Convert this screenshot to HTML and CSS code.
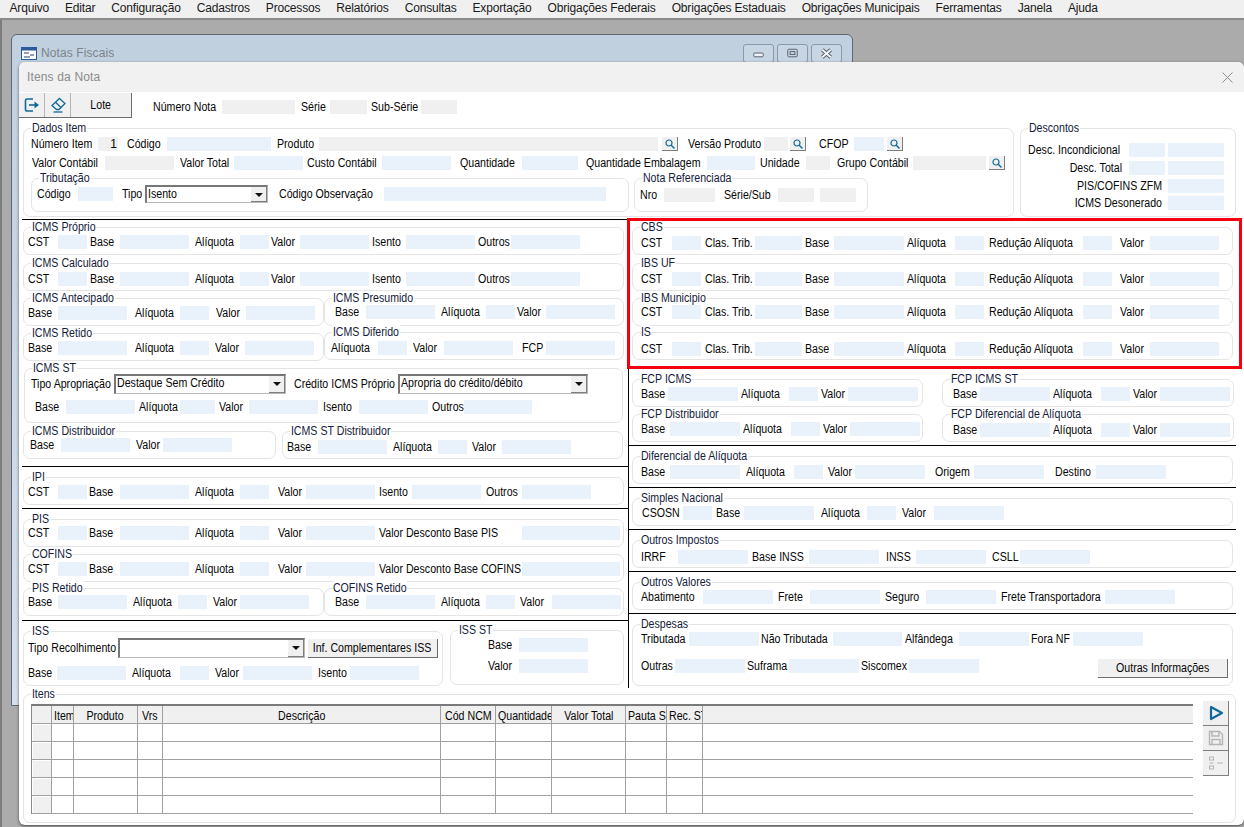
FILE: index.html
```html
<!DOCTYPE html>
<html lang="pt-BR">
<head>
<meta charset="utf-8">
<title>Itens da Nota</title>
<link rel="stylesheet" href="styles.css">
</head>
<body>
<nav class="menu">
  <a>Arquivo</a><a>Editar</a><a>Configuração</a><a>Cadastros</a><a>Processos</a><a>Relatórios</a><a>Consultas</a><a>Exportação</a><a>Obrigações Federais</a><a>Obrigações Estaduais</a><a>Obrigações Municipais</a><a>Ferramentas</a><a>Janela</a><a>Ajuda</a>
</nav>
<main class="desktop">
  <section class="win-outer">
    <header class="outer-title">
      <svg class="app-ico" viewBox="0 0 16 13"><rect x=".5" y=".5" width="15" height="12" fill="#fff" stroke="#2b5a9a"/><rect x="1" y="1" width="14" height="2.5" fill="#2b5a9a"/><path d="M3 6h5M9 8h4M3 10h6" stroke="#1f3f70" fill="none"/></svg>
      <span class="outer-name">Notas Fiscais</span>
      <div class="caption-btns">
        <span class="cap"><svg viewBox="0 0 30 18"><rect x="10" y="8.5" width="10" height="4" rx="1" fill="#eef1f5" stroke="#555e6c"/></svg></span>
        <span class="cap"><svg viewBox="0 0 30 18"><rect x="10" y="4.5" width="10" height="8" rx="1" fill="none" stroke="#555e6c"/><rect x="12.5" y="7" width="5" height="3" fill="none" stroke="#555e6c"/></svg></span>
        <span class="cap"><svg viewBox="0 0 31 18"><path d="M11 5l9 8M20 5l-9 8" stroke="#555e6c" stroke-width="4" fill="none"/><path d="M11 5l9 8M20 5l-9 8" stroke="#f2f4f7" stroke-width="2" fill="none"/></svg></span>
      </div>
    </header>
  </section>

  <section class="win-inner">
    <header class="inner-title">
      <span>Itens da Nota</span>
      <svg class="inner-x" viewBox="0 0 11 11"><path d="M.5.5l10 10M10.5.5l-10 10" stroke="#8d8d8d" fill="none"/></svg>
    </header>

    <div class="head-row">
      <div class="tbar">
        <button class="tb w25"><svg viewBox="0 0 16 16"><path d="M9 2H3a1.5 1.5 0 0 0-1.5 1.5v9A1.5 1.5 0 0 0 3 14h6" fill="none" stroke="#10699a" stroke-width="1.6"/><path d="M5 8h8" stroke="#10699a" stroke-width="1.6"/><path d="M10.5 4.5 15 8l-4.500 3.500z" fill="#10699a"/></svg></button>
        <button class="tb w26"><svg viewBox="0 0 16 16"><path d="M9.500 1.500 15 6.500 9 12.500H6.500L2 8.500z" fill="none" stroke="#10699a" stroke-width="1.300"/><path d="M5.500 5.200 11 10.500" stroke="#10699a" stroke-width="1.300"/><path d="M3.500 15h9" stroke="#10699a" stroke-width="1.300"/></svg></button>
        <button class="tb w61"><span class="n">Lote</span></button>
      </div>
      <div class="row t-nota"><span class="l">Número Nota</span><input class="f d" readonly><span class="l p6">Série</span><input class="f d" readonly><span class="l p4">Sub-Série</span><input class="f d" readonly></div>
    </div>

    <div class="top">
      <fieldset class="grp dados">
        <legend class="lg">Dados Item</legend>
        <div class="row t-d1"><span class="l">Número Item</span><input class="f d num" value="1" readonly><span class="l p9">Código</span><input class="f" readonly><span class="l p6">Produto</span><input class="f d" readonly>
          <button class="sb"><svg viewBox="0 0 10 10"><circle cx="4" cy="4" r="3" fill="none" stroke="#10699a" stroke-width="1.200"/><path d="M6.200 6.200 9.500 9.500" stroke="#10699a" stroke-width="1.400"/></svg></button>
          <span class="l p10">Versão Produto</span><input class="f d" readonly>
          <button class="sb"><svg viewBox="0 0 10 10"><circle cx="4" cy="4" r="3" fill="none" stroke="#10699a" stroke-width="1.200"/><path d="M6.200 6.200 9.500 9.500" stroke="#10699a" stroke-width="1.400"/></svg></button>
          <span class="l p13">CFOP</span><input class="f" readonly>
          <button class="sb"><svg viewBox="0 0 10 10"><circle cx="4" cy="4" r="3" fill="none" stroke="#10699a" stroke-width="1.200"/><path d="M6.200 6.200 9.500 9.500" stroke="#10699a" stroke-width="1.400"/></svg></button>
        </div>
        <div class="row t-d2 rg5"><span class="l">Valor Contábil</span><input class="f d" readonly><span class="l p6">Valor Total</span><input class="f" readonly><span class="l p4">Custo Contábil</span><input class="f" readonly><span class="l p9">Quantidade</span><input class="f" readonly><span class="l p8">Quantidade Embalagem</span><input class="f" readonly><span class="l p5">Unidade</span><input class="f d" readonly><span class="l p7">Grupo Contábil</span><input class="f d" readonly>
          <button class="sb"><svg viewBox="0 0 10 10"><circle cx="4" cy="4" r="3" fill="none" stroke="#10699a" stroke-width="1.200"/><path d="M6.200 6.200 9.500 9.500" stroke="#10699a" stroke-width="1.400"/></svg></button>
        </div>
        <div class="sub-pair">
          <fieldset class="grp trib">
            <legend class="lg">Tributação</legend>
            <div class="row tall t-trib"><span class="l">Código</span><input class="f" readonly><span class="l p9">Tipo</span><div class="combo"><span class="cv">Isento</span><i class="arrow"></i></div><span class="l p11">Código Observação</span><input class="f" readonly></div>
          </fieldset>
          <fieldset class="grp nref">
            <legend class="lg">Nota Referenciada</legend>
            <div class="row tall t-nref"><span class="l">Nro</span><input class="f d" readonly><span class="l p9">Série/Sub</span><input class="f d" readonly><input class="f d fe36" readonly></div>
          </fieldset>
        </div>
      </fieldset>

      <fieldset class="grp desc">
        <legend class="lg">Descontos</legend>
        <div class="row t-desc"><span class="l">Desc. Incondicional</span><input class="f" readonly><input class="f fe56" readonly></div>
        <div class="row t-desc rg4"><span class="l r7">Desc. Total</span><input class="f" readonly><input class="f fe56" readonly></div>
        <div class="row t-desc2 rg4"><span class="l r6">PIS/COFINS ZFM</span><input class="f" readonly></div>
        <div class="row t-desc2 rg3"><span class="l r6">ICMS Desonerado</span><input class="f" readonly></div>
      </fieldset>
    </div>

    <div class="cols">
      <div class="col-left">
        <fieldset class="grp full mt7"><legend class="lg">ICMS Próprio</legend>
          <div class="row t-icms"><span class="l">CST</span><input class="f" readonly><span class="l p3">Base</span><input class="f" readonly><span class="l p6">Alíquota</span><input class="f" readonly><span class="l p2">Valor</span><input class="f" readonly><span class="l p3">Isento</span><input class="f" readonly><span class="l p3">Outros</span><input class="f" readonly></div>
        </fieldset>
        <fieldset class="grp full mt8 pt8"><legend class="lg">ICMS Calculado</legend>
          <div class="row t-icms"><span class="l">CST</span><input class="f" readonly><span class="l p3">Base</span><input class="f" readonly><span class="l p6">Alíquota</span><input class="f" readonly><span class="l p2">Valor</span><input class="f" readonly><span class="l p3">Isento</span><input class="f" readonly><span class="l p3">Outros</span><input class="f" readonly></div>
        </fieldset>
        <div class="pair mt7">
          <fieldset class="grp half"><legend class="lg">ICMS Antecipado</legend>
            <div class="row t-ant"><span class="l">Base</span><input class="f" readonly><span class="l p8">Alíquota</span><input class="f" readonly><span class="l p7">Valor</span><input class="f" readonly></div>
          </fieldset>
          <fieldset class="grp half2 pt6"><legend class="lg">ICMS Presumido</legend>
            <div class="row t-pres"><span class="l">Base</span><input class="f" readonly><span class="l p6">Alíquota</span><input class="f" readonly><span class="l p2">Valor</span><input class="f" readonly></div>
          </fieldset>
        </div>
        <div class="pair mt7">
          <fieldset class="grp half"><legend class="lg">ICMS Retido</legend>
            <div class="row t-ret"><span class="l">Base</span><input class="f" readonly><span class="l p8">Alíquota</span><input class="f" readonly><span class="l p6">Valor</span><input class="f" readonly></div>
          </fieldset>
          <fieldset class="grp half2 up1 pt8"><legend class="lg">ICMS Diferido</legend>
            <div class="row t-dif"><span class="l">Alíquota</span><input class="f" readonly><span class="l p6">Valor</span><input class="f" readonly><span class="l p9">FCP</span><input class="f" readonly></div>
          </fieldset>
        </div>
        <fieldset class="grp st mt7 pt5"><legend class="lg">ICMS ST</legend>
          <div class="row tall20 t-st1"><span class="l">Tipo Apropriação</span><div class="combo"><span class="cv">Destaque Sem Crédito</span><i class="arrow"></i></div><span class="l p8">Crédito ICMS Próprio</span><div class="combo"><span class="cv">Apropria do crédito/débito</span><i class="arrow"></i></div></div>
          <div class="row t-st2 rg6"><span class="l">Base</span><input class="f" readonly><span class="l p4">Alíquota</span><input class="f" readonly><span class="l p4">Valor</span><input class="f" readonly><span class="l p5">Isento</span><input class="f" readonly><span class="l p4">Outros</span><input class="f" readonly></div>
        </fieldset>
        <div class="pair mt8">
          <fieldset class="grp dist pt6"><legend class="lg">ICMS Distribuidor</legend>
            <div class="row t-dist"><span class="l">Base</span><input class="f" readonly><span class="l p6">Valor</span><input class="f" readonly></div>
          </fieldset>
          <fieldset class="grp dist2 pt8"><legend class="lg">ICMS ST Distribuidor</legend>
            <div class="row t-dist2"><span class="l">Base</span><input class="f" readonly><span class="l p6">Alíquota</span><input class="f" readonly><span class="l p5">Valor</span><input class="f" readonly></div>
          </fieldset>
        </div>
        <hr class="rule mt7">
        <fieldset class="grp full mt10"><legend class="lg">IPI</legend>
          <div class="row t-ipi"><span class="l">CST</span><input class="f" readonly><span class="l p2">Base</span><input class="f" readonly><span class="l p6">Alíquota</span><input class="f" readonly><span class="l p9">Valor</span><input class="f" readonly><span class="l p4">Isento</span><input class="f" readonly><span class="l p5">Outros</span><input class="f" readonly></div>
        </fieldset>
        <hr class="rule mt3">
        <fieldset class="grp full mt10 pt6"><legend class="lg">PIS</legend>
          <div class="row t-pis"><span class="l">CST</span><input class="f" readonly><span class="l p2">Base</span><input class="f" readonly><span class="l p6">Alíquota</span><input class="f" readonly><span class="l p9">Valor</span><input class="f" readonly><span class="l p4">Valor Desconto Base PIS</span><input class="f" readonly></div>
        </fieldset>
        <fieldset class="grp full mt7"><legend class="lg">COFINS</legend>
          <div class="row t-pis"><span class="l">CST</span><input class="f" readonly><span class="l p2">Base</span><input class="f" readonly><span class="l p6">Alíquota</span><input class="f" readonly><span class="l p9">Valor</span><input class="f" readonly><span class="l p4">Valor Desconto Base COFINS</span><input class="f" readonly></div>
        </fieldset>
        <div class="pair mt6">
          <fieldset class="grp half pt6"><legend class="lg">PIS Retido</legend>
            <div class="row t-pret"><span class="l">Base</span><input class="f" readonly><span class="l p6">Alíquota</span><input class="f" readonly><span class="l p6">Valor</span><input class="f" readonly></div>
          </fieldset>
          <fieldset class="grp half2 pt6"><legend class="lg">COFINS Retido</legend>
            <div class="row t-cret"><span class="l">Base</span><input class="f" readonly><span class="l p6">Alíquota</span><input class="f" readonly><span class="l p5">Valor</span><input class="f" readonly></div>
          </fieldset>
        </div>
        <hr class="rule mt4">
        <div class="pair mt10">
          <fieldset class="grp iss pt6"><legend class="lg">ISS</legend>
            <div class="row tall20 t-iss1"><span class="l">Tipo Recolhimento</span><div class="combo"><span class="cv"></span><i class="arrow"></i></div><button class="btn btn-iss"><span class="n">Inf. Complementares ISS</span></button></div>
            <div class="row t-iss2 rg8"><span class="l">Base</span><input class="f" readonly><span class="l p6">Alíquota</span><input class="f" readonly><span class="l p6">Valor</span><input class="f" readonly><span class="l p6">Isento</span><input class="f" readonly></div>
          </fieldset>
          <fieldset class="grp issst up1"><legend class="lg">ISS ST</legend>
            <div class="row t-issst"><span class="l">Base</span><input class="f" readonly></div>
            <div class="row t-issst rg7"><span class="l">Valor</span><input class="f" readonly></div>
          </fieldset>
        </div>
      </div>

      <div class="col-right">
        <fieldset class="grp wide mt8 pt8"><legend class="lg">CBS</legend>
          <div class="row t-cbs"><span class="l">CST</span><input class="f" readonly><span class="l p4">Clas. Trib.</span><input class="f" readonly><span class="l p3">Base</span><input class="f" readonly><span class="l p3">Alíquota</span><input class="f" readonly><span class="l p5">Redução Alíquota</span><input class="f" readonly><span class="l p8">Valor</span><input class="f" readonly></div>
        </fieldset>
        <fieldset class="grp wide mt8 pt8"><legend class="lg">IBS UF</legend>
          <div class="row t-cbs"><span class="l">CST</span><input class="f" readonly><span class="l p4">Clas. Trib.</span><input class="f" readonly><span class="l p3">Base</span><input class="f" readonly><span class="l p3">Alíquota</span><input class="f" readonly><span class="l p5">Redução Alíquota</span><input class="f" readonly><span class="l p8">Valor</span><input class="f" readonly></div>
        </fieldset>
        <fieldset class="grp wide mt7 pt6"><legend class="lg">IBS Municipio</legend>
          <div class="row t-cbs"><span class="l">CST</span><input class="f" readonly><span class="l p4">Clas. Trib.</span><input class="f" readonly><span class="l p3">Base</span><input class="f" readonly><span class="l p3">Alíquota</span><input class="f" readonly><span class="l p5">Redução Alíquota</span><input class="f" readonly><span class="l p8">Valor</span><input class="f" readonly></div>
        </fieldset>
        <fieldset class="grp wide mt6 pt9"><legend class="lg">IS</legend>
          <div class="row t-cbs"><span class="l">CST</span><input class="f" readonly><span class="l p4">Clas. Trib.</span><input class="f" readonly><span class="l p3">Base</span><input class="f" readonly><span class="l p3">Alíquota</span><input class="f" readonly><span class="l p5">Redução Alíquota</span><input class="f" readonly><span class="l p8">Valor</span><input class="f" readonly></div>
        </fieldset>
        <div class="pair mt19">
          <fieldset class="grp fcp"><legend class="lg">FCP ICMS</legend>
            <div class="row t-fcp1"><span class="l">Base</span><input class="f" readonly><span class="l p3">Alíquota</span><input class="f" readonly><span class="l p3">Valor</span><input class="f" readonly></div>
          </fieldset>
          <fieldset class="grp fcp2"><legend class="lg">FCP ICMS ST</legend>
            <div class="row t-fcp2"><span class="l">Base</span><input class="f" readonly><span class="l p3">Alíquota</span><input class="f" readonly><span class="l p3">Valor</span><input class="f" readonly></div>
          </fieldset>
        </div>
        <div class="pair mt7">
          <fieldset class="grp fcp"><legend class="lg">FCP Distribuidor</legend>
            <div class="row t-fcp3"><span class="l">Base</span><input class="f" readonly><span class="l p3">Alíquota</span><input class="f" readonly><span class="l p3">Valor</span><input class="f" readonly></div>
          </fieldset>
          <fieldset class="grp fcp2 pt8"><legend class="lg">FCP Diferencial de Alíquota</legend>
            <div class="row t-fcp2"><span class="l">Base</span><input class="f" readonly><span class="l p3">Alíquota</span><input class="f" readonly><span class="l p3">Valor</span><input class="f" readonly></div>
          </fieldset>
        </div>
        <hr class="rule-r mt3">
        <fieldset class="grp wide mt10 pt8"><legend class="lg">Diferencial de Alíquota</legend>
          <div class="row t-difal"><span class="l">Base</span><input class="f" readonly><span class="l p6">Alíquota</span><input class="f" readonly><span class="l p5">Valor</span><input class="f" readonly><span class="l p10">Origem</span><input class="f" readonly><span class="l p11">Destino</span><input class="f" readonly></div>
        </fieldset>
        <hr class="rule-r mt3">
        <fieldset class="grp wide mt10"><legend class="lg">Simples Nacional</legend>
          <div class="row t-sn"><span class="l">CSOSN</span><input class="f" readonly><span class="l p4">Base</span><input class="f" readonly><span class="l p7">Alíquota</span><input class="f" readonly><span class="l p6">Valor</span><input class="f" readonly></div>
        </fieldset>
        <hr class="rule-r mt3">
        <fieldset class="grp wide mt10 pt9"><legend class="lg">Outros Impostos</legend>
          <div class="row t-imp"><span class="l">IRRF</span><input class="f" readonly><span class="l p4">Base INSS</span><input class="f" readonly><span class="l p7">INSS</span><input class="f" readonly><span class="l p6">CSLL</span><input class="f" readonly></div>
        </fieldset>
        <hr class="rule-r mt3">
        <fieldset class="grp wide mt10"><legend class="lg">Outros Valores</legend>
          <div class="row t-val"><span class="l">Abatimento</span><input class="f" readonly><span class="l p5">Frete</span><input class="f" readonly><span class="l p5">Seguro</span><input class="f" readonly><span class="l p5">Frete Transportadora</span><input class="f" readonly></div>
        </fieldset>
        <hr class="rule-r mt3">
        <fieldset class="grp wide desp mt10"><legend class="lg">Despesas</legend>
          <div class="row t-de1"><span class="l">Tributada</span><input class="f" readonly><span class="l p2">Não Tributada</span><input class="f" readonly><span class="l p3">Alfândega</span><input class="f" readonly><span class="l p2">Fora NF</span><input class="f" readonly></div>
          <div class="row t-de2 rg8"><span class="l">Outras</span><input class="f" readonly><span class="l p2">Suframa</span><input class="f" readonly><span class="l p2">Siscomex</span><input class="f" readonly><button class="btn btn-out"><span class="n">Outras Informações</span></button></div>
        </fieldset>
        <div class="red-mark"></div>
      </div>
    </div>

    <fieldset class="grp itens"><legend class="lg">Itens</legend>
      <table class="grid">
        <thead><tr><th class="c0"></th><th class="c1 cl"><span class="n">Item</span></th><th class="c2"><span class="n">Produto</span></th><th class="c3"><span class="n">Vrs</span></th><th class="c4"><span class="n">Descrição</span></th><th class="c5"><span class="n">Cód NCM</span></th><th class="c6 cl"><span class="n">Quantidade</span></th><th class="c7"><span class="n">Valor Total</span></th><th class="c8 cl"><span class="n">Pauta ST</span></th><th class="c9 cl"><span class="n">Rec. ST</span></th><th></th></tr></thead>
        <tbody>
          <tr><td class="rh"></td><td></td><td></td><td></td><td></td><td></td><td></td><td></td><td></td><td></td><td></td></tr>
          <tr><td class="rh"></td><td></td><td></td><td></td><td></td><td></td><td></td><td></td><td></td><td></td><td></td></tr>
          <tr><td class="rh"></td><td></td><td></td><td></td><td></td><td></td><td></td><td></td><td></td><td></td><td></td></tr>
          <tr><td class="rh"></td><td></td><td></td><td></td><td></td><td></td><td></td><td></td><td></td><td></td><td></td></tr>
          <tr><td class="rh"></td><td></td><td></td><td></td><td></td><td></td><td></td><td></td><td></td><td></td><td></td></tr>
        </tbody>
      </table>
      <div class="side">
        <button class="sd"><svg viewBox="0 0 16 16"><path d="M3 2 14 8 3 14z" fill="none" stroke="#10699a" stroke-width="2.200" stroke-linejoin="round"/></svg></button>
        <button class="sd"><svg viewBox="0 0 16 16"><path d="M1.500 1.500h10l3 3v10h-13z" fill="none" stroke="#b4b4b4" stroke-width="1.400"/><path d="M4 2v4h7V2M4 14V9.500h8V14" fill="none" stroke="#b4b4b4" stroke-width="1.400"/></svg></button>
        <button class="sd"><svg viewBox="0 0 16 16"><rect x="1.500" y="2" width="4" height="3" fill="none" stroke="#b4b4b4"/><rect x="1.500" y="11" width="4" height="3" fill="none" stroke="#b4b4b4"/><path d="M1.500 8h4M9 8h6" stroke="#b4b4b4"/></svg></button>
      </div>
    </fieldset>
  </section>
</main>
</body>
</html>
```
FILE: styles.css
```css
* { box-sizing: border-box; }
html, body { margin: 0; height: 100%; overflow: hidden; }
body {
  width: 1244px; height: 827px; background: #ababab;
  font: 12px/14px "Liberation Sans", Arial, sans-serif;
  color: #050505;
}
button, input { font: inherit; color: inherit; }

/* menu */
.menu {
  display: flex; height: 20px; padding-left: 1.5px; background: #f0f0f0;
  border-bottom: 2px solid #8a8a8a;
  font: 12px/17px "Liberation Sans", Arial, sans-serif; letter-spacing: -.17px; color: #1a1a1a;
}
.menu a { padding: 0 8px; }

/* desktop + windows */
.desktop { position: relative; height: 807px; border-left: 2px solid #7c7c7c; background: #ababab; }
.win-outer {
  position: absolute; left: 9px; top: 14px; width: 842px; height: 672px;
  background: linear-gradient(#c0d0df, #d6e0ec);
  border: 1px solid #5e6873; border-radius: 6px 6px 0 0;
}
.outer-title { display: flex; align-items: center; height: 27px; padding: 8px 10px 0 9px; }
.app-ico { width: 16px; height: 13px; margin-top: 2px; }
.outer-name { margin-left: 4px; letter-spacing: .1px; color: #7d838b; }
.caption-btns { display: flex; gap: 3px; margin-left: auto; margin-top: 1px; }
.cap {
  display: block; width: 31px; height: 19px;
  border: 1px solid #8b99ac; border-radius: 3px; background: #c8d6e4;
}
.cap svg { display: block; width: 100%; height: 100%; }

.win-inner {
  position: absolute; left: 17px; top: 42px; width: 1225px; height: 763px;
  background: #fff; border-radius: 6px;
  box-shadow: 0 1px 3px rgba(40, 40, 40, .75);
}
.inner-title {
  display: flex; align-items: center; justify-content: space-between;
  height: 30px; padding: 0 11px 0 8px; background: #f1f1f1; border-radius: 6px 6px 0 0;
  letter-spacing: .15px; color: #8b8b8b;
}
.inner-x { width: 11px; height: 11px; }

.head-row { display: flex; margin-top: 1px; height: 25px; }
.tbar { display: flex; height: 25px; border-right: 1px solid #6e6e6e; border-bottom: 1px solid #6e6e6e; }
.tb {
  padding: 0; height: 24px; border: 0; border-right: 1px solid #b5b5b5; background: #f0f0f0;
  display: flex; align-items: center; justify-content: center;
}
.tb:last-child { border-right: 0; }
.tb svg { width: 16px; height: 16px; }
.w25 { width: 26px; }
.w26 { width: 26px; }
.w61 { width: 60px; }

.t-nota { margin: 7px 0 0 21px; grid-template-columns: 69px 73px 35px 37px 54px 36px; }

/* the source UI uses a tall, condensed bitmap face: squeeze the sans to match */
.l, .lg, .cv, .n { transform: scaleX(.885); transform-origin: 0 50%; }
.n { display: inline-block; white-space: nowrap; }

/* shared group */
.grp {
  position: relative; display: block; margin: 0; min-width: 0; height: 28px;
  padding: 7px 0 0; border: 1px solid #e4e4e4; border-radius: 7px; background: #fff;
}
.lg {
  position: absolute; left: 7px; top: -8px; padding: 0 1px; height: 14px;
  background: #fff; line-height: 14px; color: #14203a; white-space: nowrap;
}
.pt5 { padding-top: 5px; } .pt6 { padding-top: 6px; } .pt8 { padding-top: 8px; } .pt9 { padding-top: 9px; }
.mt3 { margin-top: 3px; } .mt4 { margin-top: 4px; } .mt6 { margin-top: 6px; } .mt7 { margin-top: 7px; }
.mt8 { margin-top: 8px; } .mt10 { margin-top: 10px; } .mt19 { margin-top: 19px; }
.up1 { margin-top: -1px; }
.rg3 { margin-top: 3px; } .rg4 { margin-top: 4px; } .rg5 { margin-top: 5px; } .rg6 { margin-top: 6px; }
.rg7 { margin-top: 7px; } .rg8 { margin-top: 8px; }

/* rows */
.row { display: grid; height: 14px; align-items: center; }
.tall { height: 18px; }
.tall20 { height: 20px; }
.l { white-space: nowrap; min-width: 0; line-height: 14px; }
.p2 { margin-left: 2px; } .p3 { margin-left: 3px; } .p4 { margin-left: 4px; } .p5 { margin-left: 5px; }
.p6 { margin-left: 6px; } .p7 { margin-left: 7px; } .p8 { margin-left: 8px; } .p9 { margin-left: 9px; }
.p10 { margin-left: 10px; } .p11 { margin-left: 11px; } .p13 { margin-left: 13px; }
.r6 { margin-right: 6px; text-align: right; transform-origin: 100% 50%; }
.r7 { margin-right: 7px; text-align: right; transform-origin: 100% 50%; }
.f {
  display: block; width: 100%; min-width: 0; height: 14px; padding: 0 1px; margin: 0;
  border: 0; border-radius: 0; outline: 0; background: #e9f1fb;
}
.d { background: #f0f0f0; }
.num { text-align: right; }
.fe36 { width: 36px; justify-self: end; }
.fe56 { width: 56px; justify-self: end; }
.sb {
  display: flex; align-items: center; justify-content: center; justify-self: end;
  width: 16px; height: 14px; padding: 0; background: #f0f0f0;
  border: 0; border-right: 1px solid #7d7d7d; border-bottom: 1px solid #7d7d7d;
}
.sb svg { width: 10px; height: 10px; }
.btn {
  display: flex; align-items: center; justify-content: center;
  padding: 0; background: #f0f0f0; border: 0;
  border-right: 1px solid #6e6e6e; border-bottom: 1px solid #6e6e6e;
  justify-self: end;
}
.btn .n { flex: none; transform-origin: 50% 50%; }
.tb .n { transform-origin: 50% 50%; }
.btn-iss { width: 130px; height: 19px; }
.btn-out { width: 130px; height: 19px; align-self: start; margin-top: 5px; }

.combo {
  display: flex; justify-content: space-between; align-items: stretch; height: 100%;
  background: #fff; padding-left: 1px;
  border: 1px solid #8c8c8c; border-top: 2px solid #777; border-left: 2px solid #777;
  border-right-color: #b8b8b8; border-bottom-color: #b8b8b8;
  white-space: nowrap; overflow: hidden; line-height: 14px;
}
.cv { flex: none; }
.arrow { position: relative; flex: none; width: 16px; background: #f0f0f0; border-right: 1px solid #7d7d7d; border-bottom: 1px solid #7d7d7d; }
.arrow::after {
  content: ""; position: absolute; left: 4px; top: 6px;
  border: 4px solid transparent; border-top: 4px solid #111; border-bottom: 0;
}

/* top block */
.top { display: flex; gap: 6px; margin: 10px 0 0 4px; }
.dados { width: 991px; height: 89px; padding-top: 8px; }
.desc { width: 216px; height: 89px; padding-top: 14px; }
.t-d1 { padding-left: 7px; grid-template-columns: 67px 20px 49px 104px 48px 339px 20px 86px 24px 18px 48px 30px 19px; }
.t-d2 { padding-left: 8px; grid-template-columns: 73px 69px 60px 69px 79px 69px 71px 56px 129px 48px 51px 24px 83px 73px 19px; }
.sub-pair { display: flex; gap: 5px; margin: 8px 0 0 7px; }
.trib { width: 598px; height: 34px; padding-top: 6px; }
.nref { width: 234px; height: 34px; padding-top: 7px; }
.t-trib { padding-left: 5px; grid-template-columns: 41px 35px 32px 123px 116px 222px; }
.t-nref { padding-left: 5px; grid-template-columns: 24px 51px 63px 36px 42px; }
.t-desc { padding-left: 7px; grid-template-columns: 101px 36px 59px; }
.t-desc2 { padding-left: 7px; grid-template-columns: 140px 56px; }

/* columns */
.cols { display: flex; margin-top: 2px; height: 469px; }
.col-left { width: 606px; margin-left: 3px; padding-left: 1px; border-top: 1px solid #000; }
.col-right { position: relative; width: 608px; border-left: 1px solid #000; padding-left: 3px; }
.rule { display: block; height: 1px; margin-bottom: 0; margin-left: -1px; margin-right: 0; border: 0; background: #000; }
.rule-r { display: block; height: 1px; margin-bottom: 0; margin-left: -3px; border: 0; background: #000; }
.pair { display: flex; align-items: flex-start; }
.full { width: 601px; }
.half { width: 301px; }
.half2 { width: 300px; }
.st { width: 599px; height: 55px; margin-left: 1px; }
.dist { width: 253px; padding-top: 6px; }
.dist2 { width: 341px; margin-left: 6px; }
.iss { width: 420px; height: 55px; }
.issst { width: 174px; height: 55px; margin-left: 7px; }
.wide { width: 601px; }
.fcp { width: 291px; }
.fcp2 { width: 292px; margin-left: 19px; }
.desp { height: 62px; }

.t-icms { padding-left: 4px; grid-template-columns: 30px 29px 33px 69px 51px 29px 31px 69px 37px 69px 36px 69px; }
.t-ant { padding-left: 4px; grid-template-columns: 30px 69px 53px 29px 37px 69px; }
.t-ret { padding-left: 4px; grid-template-columns: 30px 69px 53px 29px 36px 69px; }
.t-pres { padding-left: 10px; grid-template-columns: 31px 69px 51px 29px 31px 69px; }
.t-dif { padding-left: 6px; grid-template-columns: 47px 29px 37px 69px 33px 69px; }
.t-st1 { padding-left: 6px; grid-template-columns: 83px 172px 112px 190px; }
.t-st2 { padding-left: 10px; grid-template-columns: 31px 69px 45px 35px 34px 69px 41px 69px 36px 68px; }
.t-dist { padding-left: 6px; grid-template-columns: 31px 69px 33px 69px; }
.t-dist2 { padding-left: 4px; grid-template-columns: 31px 69px 51px 29px 35px 69px; }
.t-ipi { padding-left: 4px; grid-template-columns: 30px 29px 33px 69px 51px 29px 37px 69px 37px 69px 41px 69px; }
.t-pis { padding-left: 4px; grid-template-columns: 30px 29px 33px 69px 51px 29px 37px 69px 147px 98px; }
.t-pret { padding-left: 4px; grid-template-columns: 30px 69px 51px 29px 33px 69px; }
.t-cret { padding-left: 10px; grid-template-columns: 31px 69px 51px 29px 37px 69px; }
.t-iss1 { padding-left: 4px; grid-template-columns: 90px 187px 133px; }
.t-iss2 { padding-left: 4px; grid-template-columns: 29px 69px 54px 29px 34px 69px 38px 69px; }
.t-issst { padding-left: 37px; grid-template-columns: 31px 69px; }

.t-cbs { padding-left: 8px; grid-template-columns: 31px 29px 54px 47px 32px 70px 51px 29px 99px 29px 38px 69px; }
.t-fcp1 { padding-left: 8px; grid-template-columns: 27px 70px 51px 29px 30px 70px; }
.t-fcp2 { padding-left: 10px; grid-template-columns: 27px 70px 51px 29px 30px 70px; }
.t-fcp3 { padding-left: 8px; grid-template-columns: 29px 70px 51px 29px 30px 70px; }
.t-difal { padding-left: 8px; grid-template-columns: 29px 70px 54px 29px 32px 70px 49px 70px 52px 70px; }
.t-sn { padding-left: 9px; grid-template-columns: 41px 29px 32px 70px 53px 29px 38px 70px; }
.t-imp { padding-left: 8px; grid-template-columns: 37px 70px 61px 70px 37px 70px 34px 70px; }
.t-val { padding-left: 8px; grid-template-columns: 62px 70px 37px 70px 46px 70px 109px 70px; }
.t-de1 { padding-left: 8px; grid-template-columns: 48px 70px 74px 69px 57px 70px 44px 70px; }
.t-de2 { padding-left: 8px; grid-template-columns: 34px 70px 44px 70px 50px 70px 249px; }

.red-mark {
  position: absolute; left: -2px; top: -1px; width: 615px; height: 151px;
  border: 3px solid #f4000f; pointer-events: none;
}

/* itens */
.itens { display: flex; align-items: flex-start; width: 1213px; height: 129px; margin: 6px 0 0 4px; padding: 9px 0 0 7px; }
.grid {
  table-layout: fixed; border-collapse: separate; border-spacing: 0; width: 1162px; height: 110px;
  border-top: 2px solid #7a7a7a; border-left: 1px solid #8a8a8a; flex: none;
}
.grid th, .grid td {
  box-sizing: border-box; padding: 0; height: 18px; overflow: hidden; white-space: nowrap;
  border-right: 1px solid #a0a0a0; border-bottom: 1px solid #a0a0a0;
  font-weight: 400; line-height: 14px; vertical-align: bottom;
}
.grid th { background: #f0f0f0; text-align: center; }
.grid th .n { transform-origin: 50% 50%; }
.grid th:last-child, .grid td:last-child { border-right: 0; }
.grid .cl { text-align: left; padding-left: 2px; }
.grid .cl .n { transform-origin: 0 50%; }
.c0 { width: 20px; } .c1 { width: 22px; } .c2 { width: 64px; } .c3 { width: 25px; } .c4 { width: 278px; }
.c5 { width: 55px; } .c6 { width: 56px; } .c7 { width: 74px; } .c8 { width: 41px; } .c9 { width: 36px; }
.rh { background: #f0f0f0; box-shadow: inset 1px 1px 0 #fff; }
.side { display: flex; flex-direction: column; width: 26px; margin: -3px 0 0 10px; }
.sd {
  display: flex; align-items: center; justify-content: center; height: 25px; padding: 0;
  background: #f0f0f0; border: 0; border-right: 1px solid #808080; border-bottom: 1px solid #808080;
}
.sd svg { width: 16px; height: 16px; }
```
